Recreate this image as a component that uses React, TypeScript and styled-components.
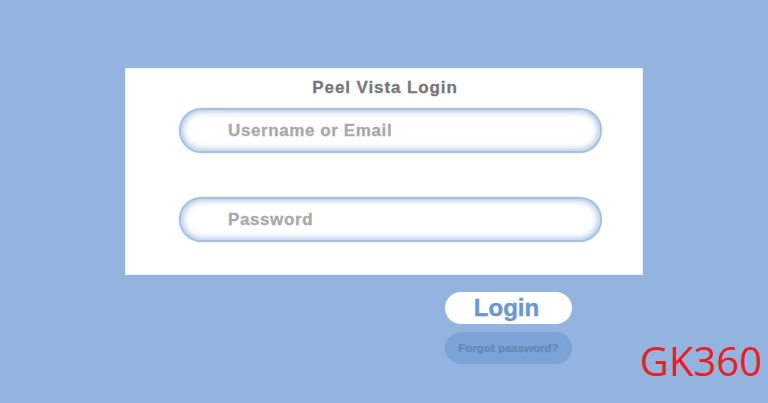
import React from "react";
import styled, { createGlobalStyle } from "styled-components";

const sky: string = `#92b4de`;
const grey: string = `#777777`;

const GlobalStyle = createGlobalStyle`
  html, body {
    margin: 0;
    padding: 0;
    background-color: ${sky};
    font-family: "Liberation Sans", Arial, sans-serif;
  }
`;

const Page = styled.main`
  width: 768px;
  height: 403px;
  position: relative;
  overflow: hidden;
  box-sizing: border-box;
  padding: 68px 0 0 125px;
  display: flex;
  flex-direction: column;
`;

const Panel = styled.section`
  width: 518px;
  height: 207px;
  box-sizing: border-box;
  background-color: #ffffff;
  border: 1px solid #eef3fa;
  padding: 9px 0 0 53px;
  display: flex;
  flex-direction: column;
`;

const Title = styled.h1`
  margin: 0 0 10px 0;
  width: 412px;
  text-align: center;
  font-size: 17px;
  line-height: 20px;
  font-weight: bold;
  letter-spacing: 0.9px;
  color: ${grey};
  -webkit-text-stroke: 0.3px ${grey};
`;

const Field = styled.div<{ $gap?: number }>`
  width: 423px;
  height: 45px;
  box-sizing: border-box;
  margin-top: ${(p) => p.$gap ?? 0}px;
  border-radius: 23px;
  border: 2px solid #a8c0e0;
  box-shadow: inset 0 0 7px 1px #9fbbe0, 0 0 2px #c7d8ee;
  background: #ffffff;
  display: flex;
  align-items: center;
  padding-left: 47px;
  font-size: 17px;
  font-weight: bold;
  letter-spacing: 0.6px;
  color: #a9a9a9;
  -webkit-text-stroke: 0.3px #a9a9a9;
`;

const Actions = styled.div`
  margin: 17px 0 0 320px;
  width: 127px;
  display: flex;
  flex-direction: column;
  gap: 8px;
`;

const LoginButton = styled.button`
  height: 32px;
  border: 0;
  border-radius: 16px;
  background-color: #ffffff;
  color: #6b98cc;
  font-family: "Liberation Sans", Arial, sans-serif;
  font-size: 24px;
  font-weight: bold;
  -webkit-text-stroke: 0.4px #6b98cc;
  padding: 0;
  text-indent: -4px;
  cursor: pointer;
`;

const ForgotButton = styled.button`
  height: 32px;
  border: 0;
  border-radius: 16px;
  background-color: #7ba3d8;
  color: #6487b6;
  font-family: "Liberation Sans", Arial, sans-serif;
  font-size: 11.5px;
  font-weight: bold;
  -webkit-text-stroke: 0.25px #6487b6;
  padding: 0;
  cursor: pointer;
`;

const Watermark = styled.div`
  position: absolute;
  right: 6px;
  bottom: 22px;
  color: #ee1c25;
  font-family: "Open Sans", "Noto Sans", sans-serif;
  font-size: 40px;
  line-height: 1;
`;

export default function App() {
  return (
    <>
      <GlobalStyle />
      <Page>
        <Panel>
          <Title>Peel Vista Login</Title>
          <Field>Username or Email</Field>
          <Field $gap={44}>Password</Field>
        </Panel>
        <Actions>
          <LoginButton>Login</LoginButton>
          <ForgotButton>Forgot password?</ForgotButton>
        </Actions>
        <Watermark>GK360</Watermark>
      </Page>
    </>
  );
}
